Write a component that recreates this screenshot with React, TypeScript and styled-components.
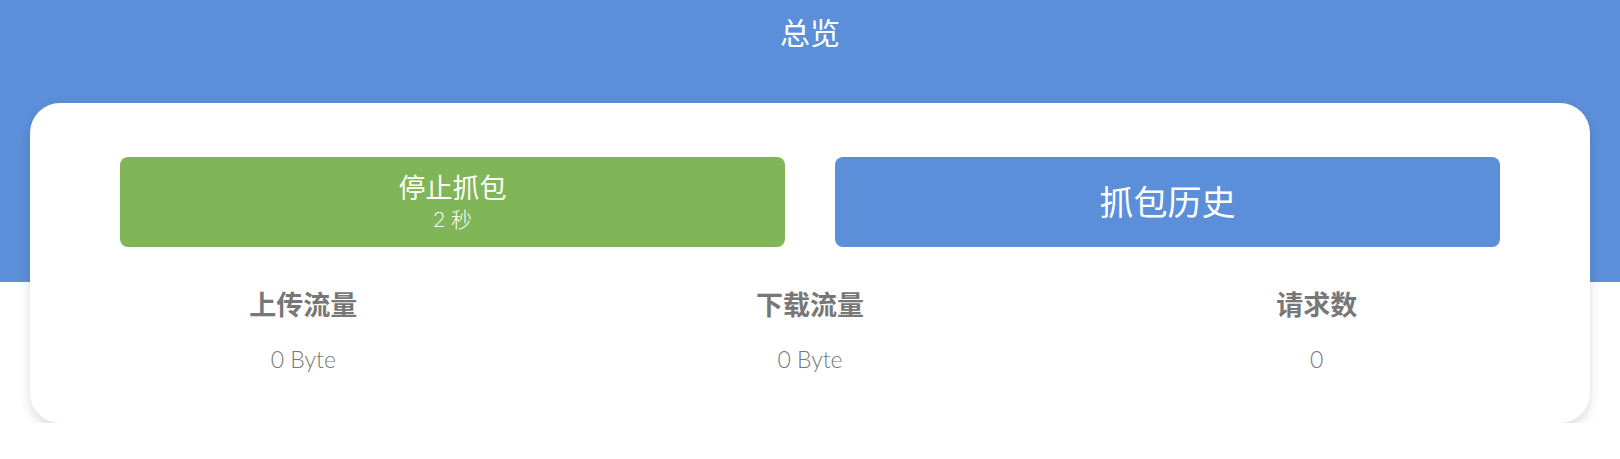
import styled, { createGlobalStyle } from 'styled-components';

const colors = {
    blue: '#5c8fda',
    green: '#80b558',
    white: '#ffffff',
    label: '#777777',
    value: '#777777',
};

const GlobalStyle = createGlobalStyle`
    html, body {
        margin: 0;
        padding: 0;
        background: ${colors.white};
        font-family: Lato, "Noto Sans CJK SC", sans-serif;
    }
`;

interface Stat {
    label: string;
    value: string;
}

const stats: Stat[] = [
    { label: '上传流量', value: '0 Byte' },
    { label: '下载流量', value: '0 Byte' },
    { label: '请求数', value: '0' },
];

export default function App() {
    return (
        <Page>
            <GlobalStyle />
            <Header>
                <Title>总览</Title>
            </Header>
            <Card>
                <Actions>
                    <ActionButton tone="green">
                        <ButtonMain size={27}>停止抓包</ButtonMain>
                        <ButtonSub>2 秒</ButtonSub>
                    </ActionButton>
                    <ActionButton tone="blue">
                        <ButtonMain size={34}>抓包历史</ButtonMain>
                    </ActionButton>
                </Actions>
                <Stats>
                    {stats.map((s) => (
                        <StatItem key={s.label}>
                            <StatLabel>{s.label}</StatLabel>
                            <StatValue>{s.value}</StatValue>
                        </StatItem>
                    ))}
                </Stats>
            </Card>
        </Page>
    );
}

const Page = styled.div`
    width: 100%;
`;

const Header = styled.header`
    height: 282px;
    background-color: ${colors.blue};
    text-align: center;
    padding-top: 17px;
    box-sizing: border-box;
`;

const Title = styled.h1`
    margin: 0;
    color: ${colors.white};
    font-size: 30px;
    line-height: 30px;
    font-weight: 400;
`;

const Card = styled.section`
    position: relative;
    margin: -179px 30px 0;
    height: 320px;
    box-sizing: border-box;
    padding: 54px 20px 0;
    background: ${colors.white};
    border-radius: 30px;
    box-shadow: 0 5px 12px rgba(0, 0, 0, 0.14);
`;

const Actions = styled.div`
    display: flex;
    gap: 50px;
    padding: 0 70px;
`;

const ActionButton = styled.button<{ tone: 'green' | 'blue' }>`
    flex: 1;
    height: 90px;
    border: none;
    border-radius: 8px;
    background-color: ${(p) => (p.tone === 'green' ? colors.green : colors.blue)};
    color: ${colors.white};
    display: flex;
    flex-direction: column;
    align-items: center;
    justify-content: center;
    font-family: inherit;
    cursor: pointer;
    padding: 0;
`;

const ButtonMain = styled.span<{ size: number }>`
    font-size: ${(p) => p.size}px;
    line-height: 1.2;
`;

const ButtonSub = styled.span`
    font-size: 21px;
    line-height: 1.3;
    font-weight: 300;
`;

const Stats = styled.div`
    display: grid;
    grid-template-columns: repeat(3, 1fr);
    margin-top: 42px;
`;

const StatItem = styled.div`
    display: flex;
    flex-direction: column;
    align-items: center;
    gap: 23px;
`;

const StatLabel = styled.div`
    color: ${colors.label};
    font-size: 27px;
    line-height: 32px;
    font-weight: 700;
`;

const StatValue = styled.div`
    color: ${colors.value};
    font-size: 23px;
    line-height: 30px;
    font-weight: 300;
`;
